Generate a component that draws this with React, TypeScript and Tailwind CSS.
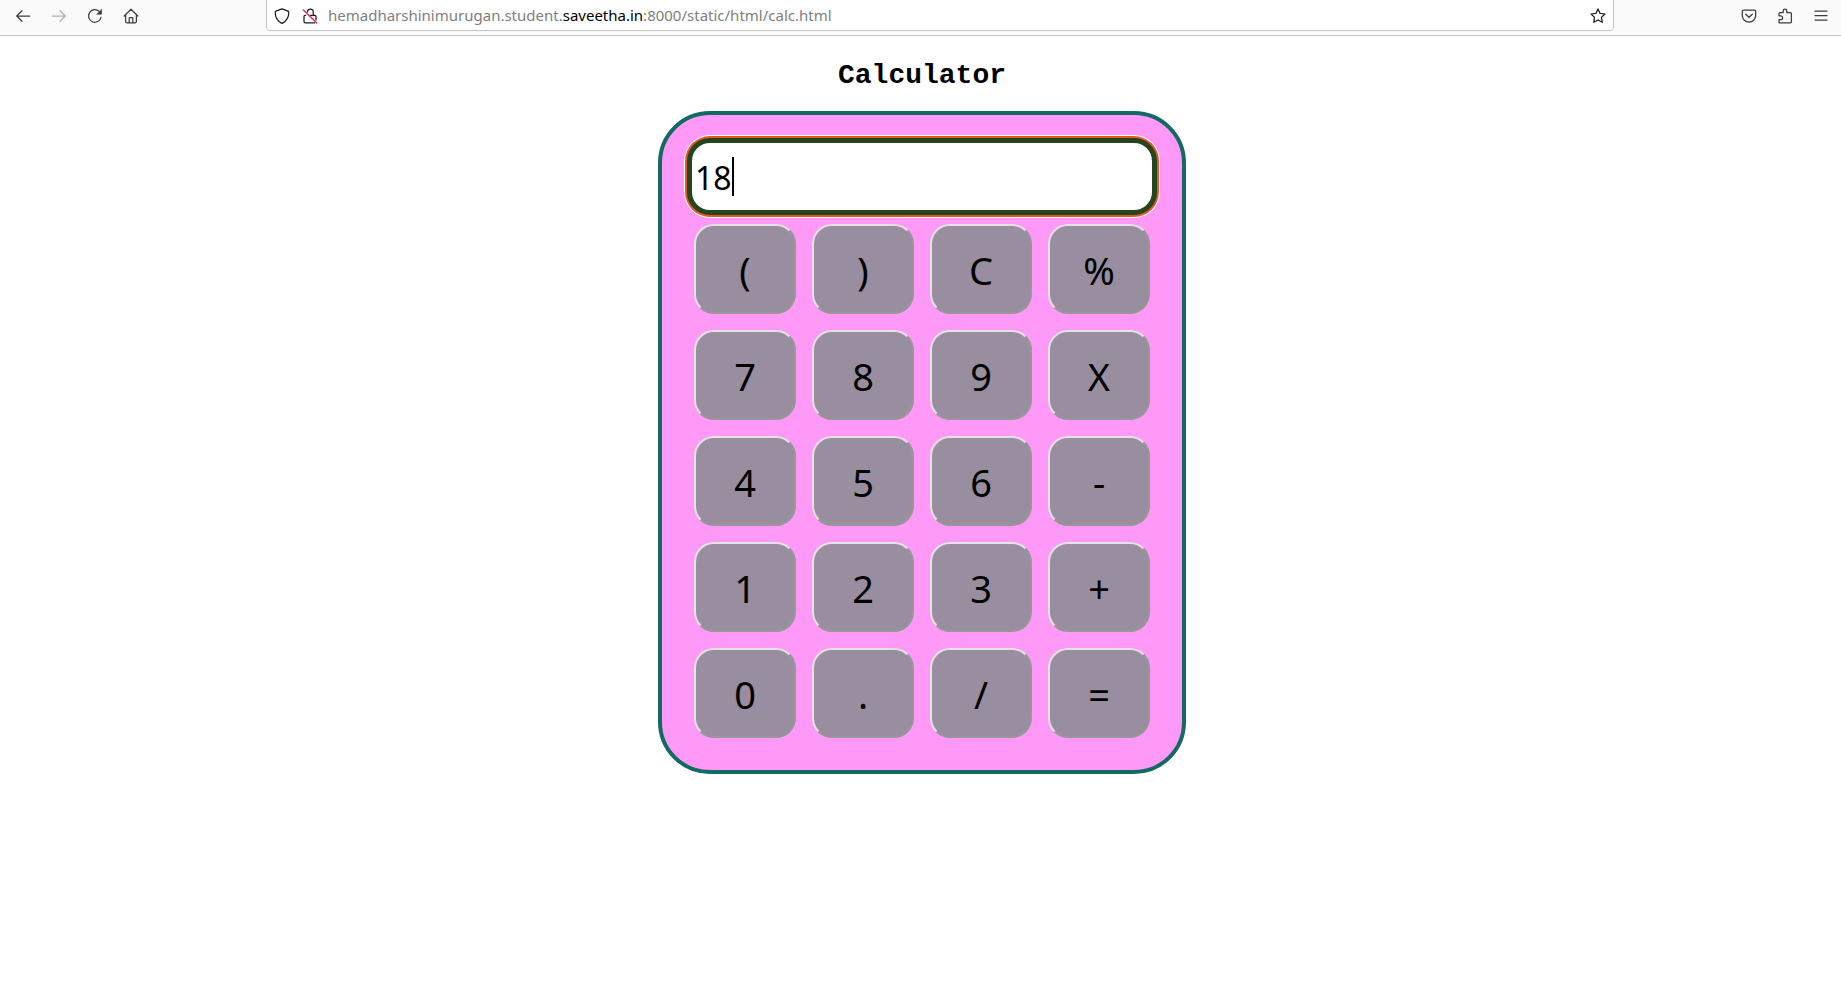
import { useState, type ReactNode } from "react";

function Icon({ children, size = 16 }: { children: ReactNode; size?: number }) {
  return (
    <svg
      width={size}
      height={size}
      viewBox="0 0 16 16"
      fill="none"
      stroke="currentColor"
      strokeWidth="1.25"
      strokeLinecap="round"
      strokeLinejoin="round"
      aria-hidden="true"
    >
      {children}
    </svg>
  );
}

function ToolButton({ label, disabled, children }: { label: string; disabled?: boolean; children: ReactNode }) {
  return (
    <button
      type="button"
      aria-label={label}
      disabled={disabled}
      className="flex h-8 w-9 items-center justify-center text-[#3b3b42] disabled:text-[#b0b0b3]"
    >
      {children}
    </button>
  );
}

function Toolbar() {
  return (
    <header className="flex h-9 items-start border-b border-[#c4c4c4] bg-[#fafafa] font-['Noto_Sans',sans-serif]">
      <nav className="flex w-[266px] shrink-0 pl-[5px]">
        <ToolButton label="Back">
          <Icon>
            <path d="M1.8 8h13M7 2.7 1.7 8 7 13.3" />
          </Icon>
        </ToolButton>
        <ToolButton label="Forward" disabled>
          <Icon>
            <path d="M14.2 8h-13M9 2.7 14.3 8 9 13.3" />
          </Icon>
        </ToolButton>
        <ToolButton label="Reload">
          <Icon>
            <path d="M14 9.3A6.3 6.3 0 1 1 12.4 3.6" />
            <path d="M14.6 1.6v4.6H10z" fill="currentColor" strokeWidth="0.6" />
          </Icon>
        </ToolButton>
        <ToolButton label="Home">
          <Icon>
            <path d="M1.2 8 8 1.2 14.8 8M2.6 7v6.6c0 .8.5 1.2 1.2 1.2h8.4c.7 0 1.2-.4 1.2-1.2V7" />
            <path d="M6.2 14.6v-4.2c0-.5.3-.8.8-.8h2c.5 0 .8.3.8.8v4.2" />
          </Icon>
        </ToolButton>
      </nav>
      <div className="-mt-1 flex h-[35px] min-w-0 grow items-center rounded border border-[#c4c4c4] bg-white pt-1 pr-[7px] pl-[7px] text-[#1b1b22]">
        <Icon>
          <path d="M8 .8 14 3.1c.5.2.8.6.8 1.2 0 4.400-1.700 8.400-6.300 10.800a1 1 0 0 1-1 0C2.900 12.700 1.200 8.700 1.200 4.300c0-.6.3-1 .8-1.200z" />
        </Icon>
        <span className="ml-3 flex">
          <Icon>
            <path d="M5.400 3.800C5.700 2 6.700 1 8.300 1c1.900 0 3 1.200 3 3.200V7.300" />
            <path d="M3.500 7.400h-.3c-.7 0-1.200.5-1.200 1.200v4.900c0 .8.500 1.300 1.200 1.300h9.400M8.600 7.400h4.200c.7 0 1.200.5 1.200 1.200v3.300" />
            <path d="M1.400 2 14.800 15" stroke="#e22850" strokeWidth="1.4" />
          </Icon>
        </span>
        <span className="ml-[10px] grow truncate text-[15px] text-[#808080]">
          hemadharshinimurugan.student.<span className="text-black">saveetha.in</span>:8000/static/html/calc.html
        </span>
        <button type="button" aria-label="Bookmark this page" className="flex">
          <Icon>
            <path d="M8 .9 10.100 5.400 15 6 11.400 9.400 12.300 14.300 8 12 3.700 14.300 4.600 9.400 1 6 5.900 5.400z" />
          </Icon>
        </button>
      </div>
      <div className="flex w-[227px] shrink-0 justify-end pr-0.5">
        <ToolButton label="Save to Pocket">
          <Icon>
            <path d="M2.700 2h10.600c.8 0 1.400.6 1.400 1.400v4.100a6.700 6.700 0 0 1-13.400 0V3.400C1.300 2.600 1.900 2 2.700 2z" />
            <path d="M4.700 6.200 8 9.300l3.300-3.100" />
          </Icon>
        </ToolButton>
        <ToolButton label="Extensions">
          <Icon>
            <path d="M2 14.800V11.600h1.700a1.900 1.900 0 0 0 0-3.800H2V5.600c0-.6.4-1 1-1h3.200V3a1.800 1.800 0 0 1 3.600 0v1.600h3.600c.6 0 1 .4 1 1v8.200c0 .6-.4 1-1 1z" />
          </Icon>
        </ToolButton>
        <ToolButton label="Open application menu">
          <Icon>
            <path d="M2 3h12M2 7.500h12M2 12h12" />
          </Icon>
        </ToolButton>
      </div>
    </header>
  );
}

const KEYS = [
  "(", ")", "C", "%",
  "7", "8", "9", "X",
  "4", "5", "6", "-",
  "1", "2", "3", "+",
  "0", ".", "/", "=",
];

function evaluate(expression: string): string {
  const source = expression.replace(/X/g, "*");
  if (!/^[\d+\-*/%.() ]+$/.test(source)) return "";
  try {
    return String(new Function(`return (${source})`)());
  } catch {
    return "Error";
  }
}

export default function App() {
  const [display, setDisplay] = useState("18");

  const press = (key: string) => {
    if (key === "C") setDisplay("");
    else if (key === "=") setDisplay(evaluate(display));
    else setDisplay(display + key);
  };

  return (
    <div className="min-h-screen bg-white text-black">
      <Toolbar />
      <main className="flex flex-col items-center pt-6 pl-[3px]">
        <h1 className="font-['Liberation_Mono',monospace] text-[28px] leading-8 font-bold">
          <label htmlFor="display">Calculator</label>
        </h1>
        <section className="mt-[19px] rounded-[52px] border-4 border-[#136a62] bg-[#ff99f8] px-[25px] pt-[23px] pb-8 font-['Noto_Sans',sans-serif]">
          <div className="relative">
            <input
              id="display"
              type="text"
              value={display}
              onChange={(event) => setDisplay(event.target.value)}
              className="block h-[77px] w-[470px] rounded-[23px] border-[5px] border-[#25451f] bg-white px-[3px] pt-0.5 text-[32px] shadow-[0_0_0_2px_#e95420,0_0_0_3px_#ffffff] outline-none"
            />
            <div
              aria-hidden="true"
              className="pointer-events-none absolute inset-y-0 left-2 flex items-center text-[32px]"
            >
              <span className="invisible">{display}</span>
              <span className="h-[39px] w-0.5 bg-black" />
            </div>
          </div>
          <div className="mt-[9px] grid grid-cols-4 gap-4 px-[7px]">
            {KEYS.map((key) => (
              <button
                key={key}
                type="button"
                onClick={() => press(key)}
                className="h-[90px] rounded-[20px] border-2 border-t-[#e3e3e3] border-r-[#979797] border-b-[#979797] border-l-[#e3e3e3] bg-[#988e9f] pt-0.5 text-[38px] leading-none"
              >
                {key}
              </button>
            ))}
          </div>
        </section>
      </main>
    </div>
  );
}
